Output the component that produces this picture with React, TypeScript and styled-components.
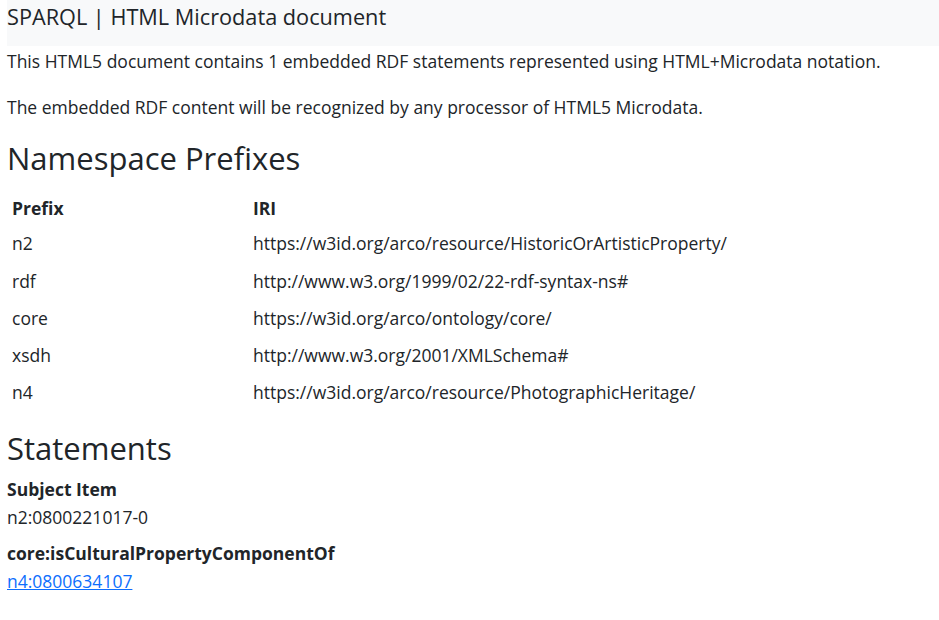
import styled, { createGlobalStyle } from "styled-components";

const GlobalStyle = createGlobalStyle`
  body {
    margin: 0;
    background: #fff;
    color: #212529;
    font-family: "Open Sans", "Noto Sans", sans-serif;
    font-size: 17.5px;
    line-height: 1.5;
  }
`;

const prefixes: [string, string][] = [
  ["n2", "https://w3id.org/arco/resource/HistoricOrArtisticProperty/"],
  ["rdf", "http://www.w3.org/1999/02/22-rdf-syntax-ns#"],
  ["core", "https://w3id.org/arco/ontology/core/"],
  ["xsdh", "http://www.w3.org/2001/XMLSchema#"],
  ["n4", "https://w3id.org/arco/resource/PhotographicHeritage/"],
];

export default function App() {
  return (
    <Page>
      <GlobalStyle />
      <TitleBar>SPARQL | HTML Microdata document</TitleBar>
      <Intro>
        This HTML5 document contains 1 embedded RDF statements represented
        using HTML+Microdata notation.
      </Intro>
      <Intro>
        The embedded RDF content will be recognized by any processor of HTML5
        Microdata.
      </Intro>

      <SectionTitle>Namespace Prefixes</SectionTitle>
      <PrefixTable>
        <thead>
          <tr>
            <HeadCell>Prefix</HeadCell>
            <HeadCell>IRI</HeadCell>
          </tr>
        </thead>
        <tbody>
          {prefixes.map(([p, iri]) => (
            <tr key={p}>
              <Cell>{p}</Cell>
              <Cell>{iri}</Cell>
            </tr>
          ))}
        </tbody>
      </PrefixTable>

      <SectionTitle $tight>Statements</SectionTitle>
      <Statement>
        <Label>Subject Item</Label>
        <Value>n2:0800221017-0</Value>
      </Statement>
      <Statement>
        <Label>core:isCulturalPropertyComponentOf</Label>
        <Value>
          <ValueLink href="#">n4:0800634107</ValueLink>
        </Value>
      </Statement>
    </Page>
  );
}

const Page = styled.div`
  padding-left: 7px;
`;

const TitleBar = styled.div`
  background: #f8f9fa;
  height: 46px;
  font-size: 21.7px;
  line-height: 34px;
  font-weight: 400;
`;

const Intro = styled.p`
  margin: 0 0 20px;
  line-height: 26px;
  &:first-of-type {
    margin-top: 2px;
  }
`;

const SectionTitle = styled.h2<{ $tight?: boolean }>`
  margin: ${(p) => (p.$tight ? "18px 0 8px" : "16px 0 15px")};
  font-size: 31px;
  font-weight: 500;
  line-height: 1.2;
`;

const PrefixTable = styled.table`
  border-collapse: collapse;
  margin-bottom: 4px;
`;

const HeadCell = styled.th`
  text-align: left;
  font-weight: 700;
  padding: 3px 5px 4px;
  &:first-child {
    width: 231px;
  }
`;

const Cell = styled.td`
  padding: 5px 5px 6px;
`;

const Statement = styled.div`
  margin-bottom: 8px;
`;

const Label = styled.div`
  font-weight: 700;
  line-height: 28px;
`;

const Value = styled.div`
  line-height: 28px;
`;

const ValueLink = styled.a`
  color: #0d6efd;
  text-decoration: underline;
`;
